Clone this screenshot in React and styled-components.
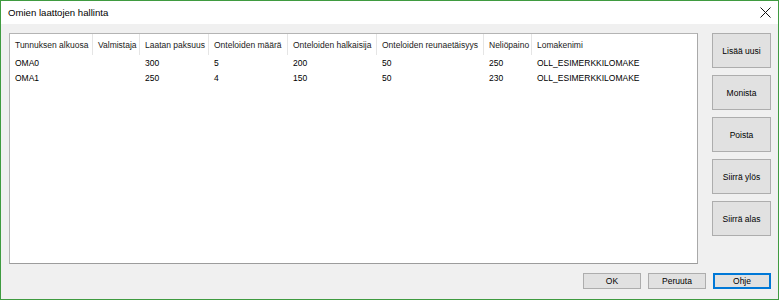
import React from 'react';
import styled, { createGlobalStyle } from 'styled-components';

const Global = createGlobalStyle`
  html, body {
    margin: 0;
    padding: 0;
    background: #fff;
  }
  body {
    font-family: "Liberation Sans", Arial, sans-serif;
  }
`;

const Window = styled.div`
  width: 779px;
  height: 300px;
  box-sizing: border-box;
  border: 1px solid #3f9b40;
  display: flex;
  flex-direction: column;
  background: #f0f0f0;
`;

const TitleBar = styled.div`
  height: 23px;
  background: #fff;
  display: flex;
  align-items: center;
  justify-content: space-between;
  padding: 0 6px 0 7px;
  flex-shrink: 0;
`;

const Title = styled.span`
  font-size: 9.6px;
  color: #000;
`;

const CloseBtn = styled.div`
  width: 14px;
  height: 14px;
  display: flex;
  align-items: center;
  justify-content: center;
`;

const Body = styled.div`
  flex: 1;
  display: flex;
  flex-direction: column;
  padding: 9px 7px 9px 8px;
`;

const MainRow = styled.div`
  display: flex;
  gap: 14px;
  height: 231px;
`;

const ListBox = styled.div`
  flex: 1;
  box-sizing: border-box;
  background: #fff;
  border: 1px solid #a9a9a9;
  border-top-color: #b4b4b4;
  border-left-color: #b4b4b4;
  border-bottom-color: #9c9c9c;
`;

const Grid = styled.div`
  display: grid;
  grid-template-columns: 83px 47px 69px 79px 89px 107px 48px 1fr;
  font-size: 8.5px;
  color: #000;
`;

const HeadCell = styled.div`
  height: 21px;
  display: flex;
  align-items: center;
  padding-left: 5px;
  white-space: nowrap;
  border-right: ${p => (p.$last ? 'none' : '1px solid #e5e5e5')};
  color: #1a1a1a;
`;

const Cell = styled.div`
  height: 15px;
  display: flex;
  align-items: center;
  padding-left: 5px;
  white-space: nowrap;
`;

const SideCol = styled.div`
  width: 59px;
  display: flex;
  flex-direction: column;
  gap: 7px;
`;

const Button = styled.button`
  box-sizing: border-box;
  width: ${p => (p.$small ? '58px' : '59px')};
  height: ${p => (p.$small ? '16px' : '35px')};
  background: #e1e1e1;
  border: 1px solid ${p => (p.$default ? '#0078d7' : '#adadad')};
  box-shadow: ${p => (p.$default ? 'inset 0 0 0 1px #0078d7' : 'none')};
  font-family: "Liberation Sans", Arial, sans-serif;
  font-size: 8.5px;
  color: #000;
  padding: 0;
  display: flex;
  align-items: center;
  justify-content: center;
`;

const Footer = styled.div`
  display: flex;
  justify-content: flex-end;
  gap: 7px;
  margin-top: 9px;
`;

const columns = [
  'Tunnuksen alkuosa',
  'Valmistaja',
  'Laatan paksuus',
  'Onteloiden määrä',
  'Onteloiden halkaisija',
  'Onteloiden reunaetäisyys',
  'Neliöpaino',
  'Lomakenimi',
];

const rows = [
  ['OMA0', '', '300', '5', '200', '50', '250', 'OLL_ESIMERKKILOMAKE'],
  ['OMA1', '', '250', '4', '150', '50', '230', 'OLL_ESIMERKKILOMAKE'],
];

const App = () => (
  <>
    <Global />
    <Window>
      <TitleBar>
        <Title>Omien laattojen hallinta</Title>
        <CloseBtn>
          <svg width="11" height="11" viewBox="0 0 11 11">
            <path d="M0.5 0.5L10.5 10.5M10.5 0.5L0.5 10.5" stroke="#111" strokeWidth="1" />
          </svg>
        </CloseBtn>
      </TitleBar>
      <Body>
        <MainRow>
          <ListBox>
            <Grid>
              {columns.map((c, i) => (
                <HeadCell key={c} $last={i === columns.length - 1}>{c}</HeadCell>
              ))}
              {rows.map((r, ri) =>
                r.map((v, ci) => <Cell key={ri + '-' + ci}>{v}</Cell>)
              )}
            </Grid>
          </ListBox>
          <SideCol>
            <Button>Lisää uusi</Button>
            <Button>Monista</Button>
            <Button>Poista</Button>
            <Button>Siirrä ylös</Button>
            <Button>Siirrä alas</Button>
          </SideCol>
        </MainRow>
        <Footer>
          <Button $small>OK</Button>
          <Button $small>Peruuta</Button>
          <Button $small $default>Ohje</Button>
        </Footer>
      </Body>
    </Window>
  </>
);

export default App;
